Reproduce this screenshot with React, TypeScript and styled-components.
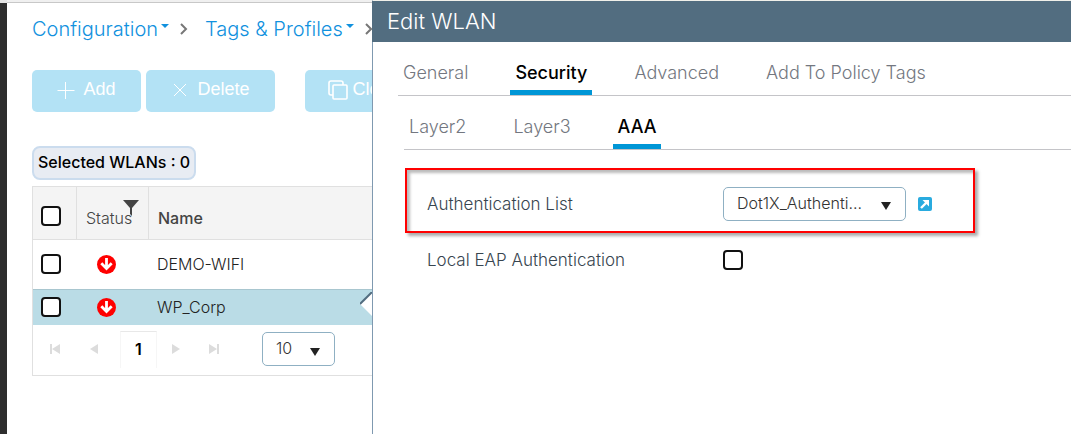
import React from "react";
import styled, { createGlobalStyle } from "styled-components";

const GlobalStyle = createGlobalStyle`
  * { box-sizing: border-box; }
  body {
    margin: 0;
    background: #fff;
    color: #222;
    font-family: Inter, "Liberation Sans", sans-serif;
    font-size: 16px;
    font-weight: 300;
  }
  button, select, input { font: inherit; color: inherit; margin: 0; }
`;

const Page = styled.div`
  display: grid;
  grid-template-columns: 7px 365px minmax(0, 1fr);
  min-height: 100vh;
`;

const Rail = styled.div`
  background: #2e2e2e;
  border-top: 3px solid #e4e4e4;
`;

const Main = styled.main`
  position: relative;
  overflow: hidden;
  padding: 15px 0 0 25px;
  border-top: 2px solid #f0f0f0;
  box-shadow: inset 0 1px 0 #c8c8c8;
`;

const Breadcrumb = styled.nav`
  display: flex;
  align-items: center;
  width: max-content;
  height: 24px;
  font-size: 20px;
  color: #777;
`;

const Crumb = styled.a`
  display: flex;
  align-items: center;
  gap: 3px;
  color: #1191de;
  text-decoration: none;
`;

const Chevron = styled.svg`
  width: 8px;
  height: 12px;
  margin: 0 17px 0 11px;
  fill: none;
  stroke: #777;
  stroke-width: 2;
`;

const Toolbar = styled.div`
  display: flex;
  gap: 5px;
  width: max-content;
  margin-top: 29px;
`;

const ToolButton = styled.button<{ $width: number; $gapBefore?: boolean }>`
  display: flex;
  align-items: center;
  justify-content: center;
  gap: 8px;
  width: ${(p) => p.$width}px;
  height: 42px;
  margin-left: ${(p) => (p.$gapBefore ? 25 : 0)}px;
  padding: 0 0 3px;
  border: 0;
  border-radius: 5px;
  background: #b3e2f5;
  color: #fff;
  font-family: "Liberation Sans", Arial, sans-serif;
  font-size: 18px;
  font-weight: 400;

  svg { fill: none; stroke: #fff; }
`;

const CloneButton = styled(ToolButton)`
  gap: 4px;
`;

const Badge = styled.div`
  width: max-content;
  height: 34px;
  margin-top: 34px;
  padding: 0 4px;
  border: 2px solid #cbdcee;
  border-radius: 8px;
  background: #e8ecf3;
  color: #000;
  font-weight: 500;
  line-height: 29px;
`;

const Grid = styled.table`
  width: 100%;
  margin-top: 6px;
  border-collapse: separate;
  border-spacing: 0;
  border: 1px solid #e0e0e0;
  border-right: 0;
  border-bottom: 0;
  table-layout: fixed;
  text-align: left;
`;

const HeadCell = styled.th<{ $width?: number }>`
  position: relative;
  width: ${(p) => (p.$width ? `${p.$width}px` : "auto")};
  height: 53px;
  padding: 9px 0 0 9px;
  border-bottom: 1px solid #e0e0e0;
  border-right: ${(p) => (p.$width ? "1px solid #e0e0e0" : "0")};
  background: #f4f4f4;
  color: #444;
  font-weight: 500;
`;

const CheckHeadCell = styled(HeadCell)`
  padding: 6px 0 0 8px;
`;

const StatusLabel = styled.span`
  font-weight: 300;
`;

const Filter = styled.svg`
  position: absolute;
  top: 13px;
  left: 46px;
  fill: #444;
`;

const Row = styled.tr<{ $height: number; $selected?: boolean }>`
  height: ${(p) => p.$height}px;
  background: ${(p) => (p.$selected ? "#badce6" : "#fff")};
  color: #222;
`;

const Cell = styled.td<{ $line?: boolean }>`
  padding: 0 0 1px 8px;
  border-top: ${(p) => (p.$line ? "1px solid #a8c6cf" : "0")};
`;

const StatusCell = styled(Cell)`
  padding: 0 13px 0 0;

  svg { display: block; margin: 0 auto; }
`;

const Check = styled.input.attrs({ type: "checkbox" })`
  display: block;
  appearance: none;
  width: 20px;
  height: 20px;
  border: 2px solid #111;
  border-radius: 4px;
  background: #fff;
`;

const Pointer = styled.svg`
  position: absolute;
  right: 0;
  top: 290px;
`;

const Pager = styled.div`
  display: flex;
  align-items: center;
  height: 51px;
  padding: 0 0 2px 17px;
  border: 1px solid #e0e0e0;
  border-top: 0;
  border-right: 0;
`;

const PageSteps = styled.div`
  display: flex;
  gap: 26px;
`;

const PageButton = styled.button`
  display: flex;
  width: 12px;
  height: 12px;
  padding: 0;
  border: 0;
  background: none;

  svg { fill: #dcdcdc; }
`;

const CurrentPage = styled.button`
  width: 37px;
  height: 37px;
  margin: 0 14px 0 20px;
  padding: 0 0 2px;
  border: 1px solid #f6f6f6;
  border-top-color: #e8e8e8;
  border-bottom: 0;
  background: none;
  color: #000;
  font-weight: 600;
`;

const PageSize = styled.div`
  margin-left: 41px;
`;

const SelectWrap = styled.span<{ $width: number }>`
  display: grid;
  flex: none;
  width: ${(p) => p.$width}px;
  align-items: center;

  select, svg { grid-area: 1 / 1; }
  svg {
    justify-self: end;
    margin: 5px 15px 0 0;
    fill: #222;
    pointer-events: none;
  }
`;

const Select = styled.select`
  appearance: none;
  width: 100%;
  height: 34px;
  padding: 0 30px 2px 13px;
  border: 1px solid #8fb0c3;
  border-radius: 5px;
  background: #fff;
  color: #333;
`;

const Panel = styled.section`
  border-top: 1px solid #f0f0ea;
  border-left: 1px solid #7f99b0;
  background: #fff;
`;

const PanelTitle = styled.h1`
  height: 41px;
  margin: 0 0 0 -1px;
  padding-left: 15px;
  background: #526d80;
  color: #fff;
  font-size: 22px;
  font-weight: 300;
  line-height: 41px;
`;

const Tabs = styled.div<{ $inset: number }>`
  display: flex;
  gap: 37px;
  height: 54px;
  margin-left: ${(p) => p.$inset}px;
  border-bottom: 1px solid #c4c4c8;
`;

const Tab = styled.button<{ $active?: boolean }>`
  height: 53px;
  padding: 13px 5px 0;
  border: 0;
  border-bottom: 5px solid ${(p) => (p.$active ? "#0096d6" : "transparent")};
  background: none;
  color: ${(p) => (p.$active ? "#000" : "#737780")};
  font-size: 18px;
  font-weight: ${(p) => (p.$active ? 500 : 300)};
`;

const Form = styled.div`
  padding: 18px 0 0 32px;
`;

const Field = styled.div<{ $marked?: boolean }>`
  display: flex;
  align-items: center;
  width: 570px;
  max-width: 100%;
  height: ${(p) => (p.$marked ? 65 : 54)}px;
  padding: ${(p) => (p.$marked ? 6 : 0)}px 0 0 20px;
  border: 2px solid ${(p) => (p.$marked ? "#f00" : "transparent")};
  box-shadow: ${(p) =>
    p.$marked ? "3px 3px 3px #aaa, inset 3px 3px 3px #bbb" : "none"};
`;

const FieldLabel = styled.label`
  width: 296px;
  color: #37454f;
  font-size: 17px;
`;

const Jump = styled.a`
  display: flex;
  margin-left: 12px;
`;

const Down = () => (
  <svg width="10" height="8" viewBox="0 0 10 8">
    <path d="M0 0h10L5 8z" />
  </svg>
);

const Caret = () => (
  <svg width="8" height="14" viewBox="0 0 8 14">
    <path d="M0 2h8L4 6z" fill="#1191de" />
  </svg>
);

const StatusDown = () => (
  <svg width="19" height="19" viewBox="0 0 19 19" role="img" aria-label="Down">
    <circle cx="9.5" cy="9.5" r="9.5" fill="#f00" />
    <path d="M9.5 3v10M4.3 8.3l5.2 5.2 5.2-5.2" fill="none" stroke="#fff" strokeWidth="2.8" />
  </svg>
);

const wlans = [
  { name: "DEMO-WIFI", height: 49 },
  { name: "WP_Corp", height: 36, selected: true },
];

export default function App() {
  return (
    <Page>
      <GlobalStyle />
      <Rail />
      <Main>
        <Breadcrumb>
          <Crumb href="#">Configuration <Caret /></Crumb>
          <Chevron viewBox="0 0 8 12"><path d="M1 1l5 5-5 5" /></Chevron>
          <Crumb href="#">Tags &amp; Profiles <Caret /></Crumb>
          <Chevron viewBox="0 0 8 12"><path d="M1 1l5 5-5 5" /></Chevron>
        </Breadcrumb>
        <Toolbar>
          <ToolButton $width={109}>
            <svg width="18" height="18" viewBox="0 0 18 18"><path d="M0.5 9.5h17M8.5 1v17" /></svg>
            Add
          </ToolButton>
          <ToolButton $width={129}>
            <svg width="18" height="18" viewBox="0 0 18 18"><path d="M3 3l12 12M15 3L3 15" /></svg>
            Delete
          </ToolButton>
          <CloneButton $width={118} $gapBefore>
            <svg width="20" height="20" viewBox="0 0 20 20" strokeWidth="1.6">
              <rect x="5" y="5" width="14" height="14" rx="1" />
              <path d="M5 15H3q-2 0-2-2V3q0-2 2-2h10q2 0 2 2v2" />
            </svg>
            Clone
          </CloneButton>
        </Toolbar>
        <Badge>Selected WLANs : 0</Badge>
        <Grid>
          <thead>
            <tr>
              <CheckHeadCell $width={44}><Check aria-label="Select all" /></CheckHeadCell>
              <HeadCell $width={72}>
                <StatusLabel>Status</StatusLabel>
                <Filter width="16" height="16" viewBox="0 0 16 16">
                  <path d="M0 0h16L9 8v8L7 14V8z" />
                </Filter>
              </HeadCell>
              <HeadCell>Name</HeadCell>
            </tr>
          </thead>
          <tbody>
            {wlans.map((w) => (
              <Row key={w.name} $height={w.height} $selected={w.selected}>
                <Cell $line={w.selected}><Check aria-label={`Select ${w.name}`} /></Cell>
                <StatusCell $line={w.selected}><StatusDown /></StatusCell>
                <Cell $line={w.selected}>{w.name}</Cell>
              </Row>
            ))}
          </tbody>
        </Grid>
        <Pager>
          <PageSteps>
            <PageButton aria-label="First page">
              <svg width="12" height="12"><path d="M0 1h2v10H0zM10 1v10L2 6z" /></svg>
            </PageButton>
            <PageButton aria-label="Previous page">
              <svg width="12" height="12"><path d="M10 1v10L2 6z" /></svg>
            </PageButton>
          </PageSteps>
          <CurrentPage>1</CurrentPage>
          <PageSteps>
            <PageButton aria-label="Next page">
              <svg width="12" height="12"><path d="M1 1v10l8-5z" /></svg>
            </PageButton>
            <PageButton aria-label="Last page">
              <svg width="12" height="12"><path d="M10 1H8v10h2zM0 1v10l8-5z" /></svg>
            </PageButton>
          </PageSteps>
          <PageSize>
            <SelectWrap $width={73}>
              <Select aria-label="Items per page"><option>10</option></Select>
              <Down />
            </SelectWrap>
          </PageSize>
        </Pager>
        <Pointer width="12" height="26" viewBox="0 0 12 26">
          <path d="M12 0L0 12l12 12z" fill="#fff" />
          <path d="M12 0L0 12" stroke="#526d80" strokeWidth="2" />
        </Pointer>
      </Main>
      <Panel>
        <PanelTitle>Edit WLAN</PanelTitle>
        <Tabs $inset={25}>
          <Tab>General</Tab>
          <Tab $active>Security</Tab>
          <Tab>Advanced</Tab>
          <Tab>Add To Policy Tags</Tab>
        </Tabs>
        <Tabs $inset={31}>
          <Tab>Layer2</Tab>
          <Tab>Layer3</Tab>
          <Tab $active>AAA</Tab>
        </Tabs>
        <Form>
          <Field $marked>
            <FieldLabel htmlFor="auth-list">Authentication List</FieldLabel>
            <SelectWrap $width={183}>
              <Select id="auth-list"><option>Dot1X_Authenti...</option></Select>
              <Down />
            </SelectWrap>
            <Jump href="#" aria-label="Open authentication list">
              <svg width="14" height="14" viewBox="0 0 14 14">
                <rect width="14" height="14" rx="2" fill="#29abdf" />
                <path d="M4.5 3h6.5v6.5z" fill="#fff" />
                <path d="M3 11l6-6" stroke="#fff" strokeWidth="2.4" />
              </svg>
            </Jump>
          </Field>
          <Field>
            <FieldLabel htmlFor="local-eap">Local EAP Authentication</FieldLabel>
            <Check id="local-eap" />
          </Field>
        </Form>
      </Panel>
    </Page>
  );
}
